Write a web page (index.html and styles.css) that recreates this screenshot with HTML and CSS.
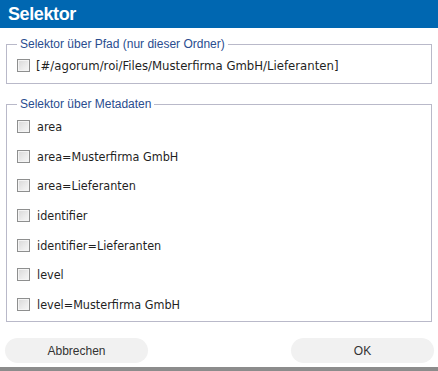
FILE: index.html
```html
<!DOCTYPE html>
<html lang="de">
<head>
<meta charset="utf-8">
<title>Selektor</title>
<link rel="stylesheet" href="styles.css">
</head>
<body>
<div class="dialog">
  <div class="titlebar">Selektor</div>
  <div class="content">
    <fieldset class="group group-path">
      <legend>Selektor über Pfad (nur dieser Ordner)</legend>
      <label class="row"><span class="cb"></span><span class="lbl lbl-path">[#/agorum/roi/Files/Musterfirma GmbH/Lieferanten]</span></label>
    </fieldset>
    <fieldset class="group group-meta">
      <legend>Selektor über Metadaten</legend>
      <label class="row"><span class="cb"></span><span class="lbl">area</span></label>
      <label class="row"><span class="cb"></span><span class="lbl">area=Musterfirma GmbH</span></label>
      <label class="row"><span class="cb"></span><span class="lbl">area=Lieferanten</span></label>
      <label class="row"><span class="cb"></span><span class="lbl">identifier</span></label>
      <label class="row"><span class="cb"></span><span class="lbl">identifier=Lieferanten</span></label>
      <label class="row"><span class="cb"></span><span class="lbl">level</span></label>
      <label class="row"><span class="cb"></span><span class="lbl">level=Musterfirma GmbH</span></label>
    </fieldset>
  </div>
  <div class="buttons">
    <button class="btn">Abbrechen</button>
    <button class="btn">OK</button>
  </div>
</div>
</body>
</html>
```
FILE: styles.css
```css
* { box-sizing: border-box; }
html, body { margin: 0; padding: 0; background: #ffffff; }
body { width: 438px; height: 371px; overflow: hidden; }
.dialog {
  width: 438px;
  height: 371px;
  background: #ffffff;
  border-bottom: 4px solid #8c8c8c;
  display: flex;
  flex-direction: column;
}
.titlebar {
  height: 28px;
  background: #0067b1;
  color: #ffffff;
  font-family: "Liberation Sans", Arial, sans-serif;
  font-weight: bold;
  font-size: 18px;
  line-height: 29px;
  padding-left: 8px;
  letter-spacing: -0.4px;
}
.content {
  padding: 9px 6px 0 6px;
}
.group {
  margin: 0;
  border: 1px solid #b9b9c9;
  padding: 0 0 0 10px;
  min-width: 0;
}
.group legend {
  padding: 0 3px;
  font-family: "Liberation Sans", Arial, sans-serif;
  font-size: 12px;
  line-height: 15px;
  color: #2a4d8f;
}
.group-path { height: 47px; padding-top: 0; }
.group-meta { margin-top: 13px; height: 225px; padding-top: 0; }
.row {
  display: flex;
  align-items: center;
  height: 29.6px;
}
.group-path .row { height: 27px; }
.cb {
  width: 13px;
  height: 13px;
  border: 1px solid #8e8f8f;
  background: linear-gradient(135deg, #d8d8d8 0%, #ececec 60%, #f7f7f7 100%);
  box-shadow: inset 0 0 0 1px #f4f4f4;
  flex: none;
}
.lbl {
  margin-left: 7px;
  font-family: "DejaVu Sans Condensed", "DejaVu Sans", sans-serif;
  font-size: 12.5px;
  color: #1f1f1f;
}
.lbl-path { font-size: 13px; margin-left: 6px; }
.buttons {
  display: flex;
  justify-content: space-between;
  padding: 0 4px 0 5px;
  margin-top: 16px;
}
.btn {
  height: 25px;
  border: none;
  border-radius: 13px;
  background: #f1f1f1;
  font-family: "Liberation Sans", Arial, sans-serif;
  font-size: 12px;
  color: #333333;
  padding: 0;
}
.btn:first-child { width: 143px; }
.btn:last-child { width: 143px; }
```
